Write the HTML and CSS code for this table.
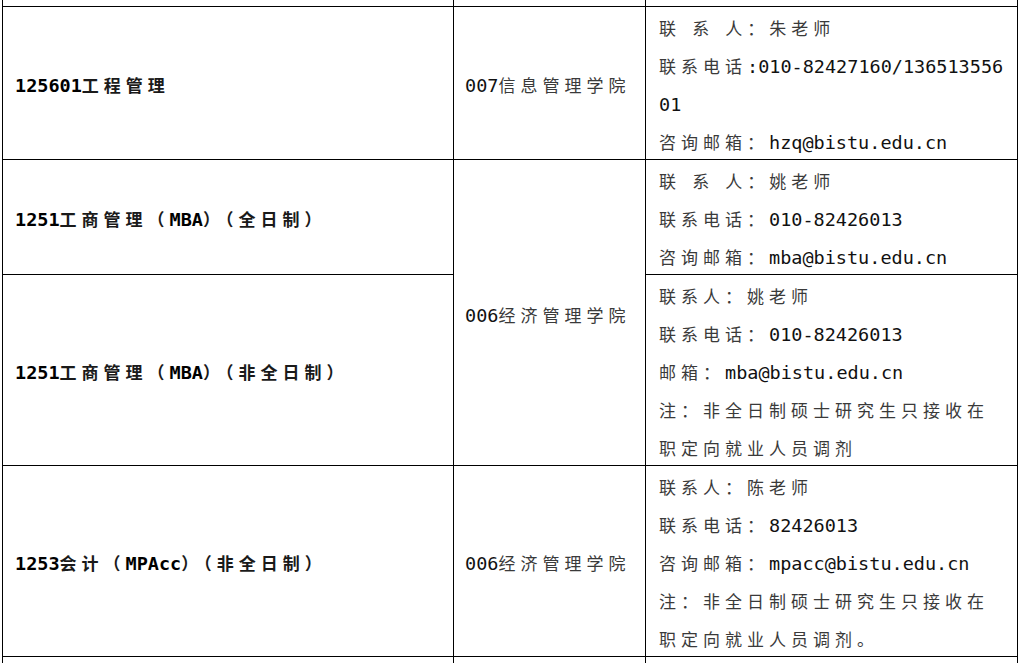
FILE: index.html
```html
<!DOCTYPE html>
<html lang="zh-CN">
<head>
<meta charset="utf-8">
<title>调剂联系方式</title>
<link rel="stylesheet" href="styles.css">
</head>
<body>
<table class="grid">
  <colgroup>
    <col class="col-major">
    <col class="col-school">
    <col class="col-contact">
  </colgroup>
  <tr class="stub"><td></td><td></td><td></td></tr>
  <tr class="r1">
    <td class="major">125601<span class="cjk">工程管理</span></td>
    <td class="school">007<span class="cjk">信息管理学院</span></td>
    <td class="contact">
      <p class="ln"><span class="cjk">联</span> <span class="cjk">系</span> <span class="cjk">人：朱老师</span></p>
      <p class="ln"><span class="cjk">联系电话</span>:010-82427160/136513556</p>
      <p class="ln">01</p>
      <p class="ln"><span class="cjk">咨询邮箱：</span>hzq@bistu.edu.cn</p>
    </td>
  </tr>
  <tr class="r2">
    <td class="major">1251<span class="cjk">工商管理（</span>MBA<span class="cjk">）（全日制）</span></td>
    <td class="school" rowspan="2">006<span class="cjk">经济管理学院</span></td>
    <td class="contact">
      <p class="ln"><span class="cjk">联</span> <span class="cjk">系</span> <span class="cjk">人：姚老师</span></p>
      <p class="ln"><span class="cjk">联系电话：</span>010-82426013</p>
      <p class="ln"><span class="cjk">咨询邮箱：</span>mba@bistu.edu.cn</p>
    </td>
  </tr>
  <tr class="r3">
    <td class="major">1251<span class="cjk">工商管理（</span>MBA<span class="cjk">）（非全日制）</span></td>
    <td class="contact">
      <p class="ln"><span class="cjk">联系人：姚老师</span></p>
      <p class="ln"><span class="cjk">联系电话：</span>010-82426013</p>
      <p class="ln"><span class="cjk">邮箱：</span>mba@bistu.edu.cn</p>
      <p class="ln"><span class="cjk">注：非全日制硕士研究生只接收在</span></p>
      <p class="ln"><span class="cjk">职定向就业人员调剂</span></p>
    </td>
  </tr>
  <tr class="r4">
    <td class="major">1253<span class="cjk">会计（</span>MPAcc<span class="cjk">）（非全日制）</span></td>
    <td class="school">006<span class="cjk">经济管理学院</span></td>
    <td class="contact">
      <p class="ln"><span class="cjk">联系人：陈老师</span></p>
      <p class="ln"><span class="cjk">联系电话：</span>82426013</p>
      <p class="ln"><span class="cjk">咨询邮箱：</span>mpacc@bistu.edu.cn</p>
      <p class="ln"><span class="cjk">注：非全日制硕士研究生只接收在</span></p>
      <p class="ln"><span class="cjk">职定向就业人员调剂。</span></p>
    </td>
  </tr>
  <tr class="stub"><td></td><td></td><td></td></tr>
</table>
</body>
</html>
```

FILE: styles.css
```css
html, body {
  margin: 0;
  padding: 0;
  background: #ffffff;
  overflow: hidden;
}

body {
  font-family: "DejaVu Sans Mono", "Noto Sans CJK SC", monospace;
  font-size: 18.5px;
  color: #111111;
}

.grid {
  border-collapse: collapse;
  table-layout: fixed;
  margin-left: 2px;
  width: 1015px;
}

.col-major { width: 451px; }
.col-school { width: 192px; }
.col-contact { width: 372px; }

.grid td {
  border: 1px solid #000000;
  padding: 6px 0 0 12px;
  vertical-align: middle;
  line-height: 32px;
  white-space: nowrap;
}

.grid .stub td {
  height: 6px;
  line-height: 0;
  padding: 0;
  border-top: none;
  border-bottom: 1px solid #000000;
}

.grid tr:last-child td {
  border-bottom: none;
  border-top: 1px solid #000000;
}

.cjk {
  font-family: "Noto Sans CJK SC", sans-serif;
  font-size: 17px;
  line-height: 20px;
  letter-spacing: 5px;
  color: #3a3a3a;
}

.major {
  font-weight: 700;
  color: #000000;
}

.major .cjk {
  color: #1a1a1a;
  font-weight: 700;
}

.grid .school {
  padding-left: 11px;
}

.grid .contact {
  padding: 0 0 0 13px;
}

.ln {
  box-sizing: border-box;
  margin: 0;
  height: 38px;
  padding-top: 6px;
  line-height: 32px;
  white-space: nowrap;
}
```
